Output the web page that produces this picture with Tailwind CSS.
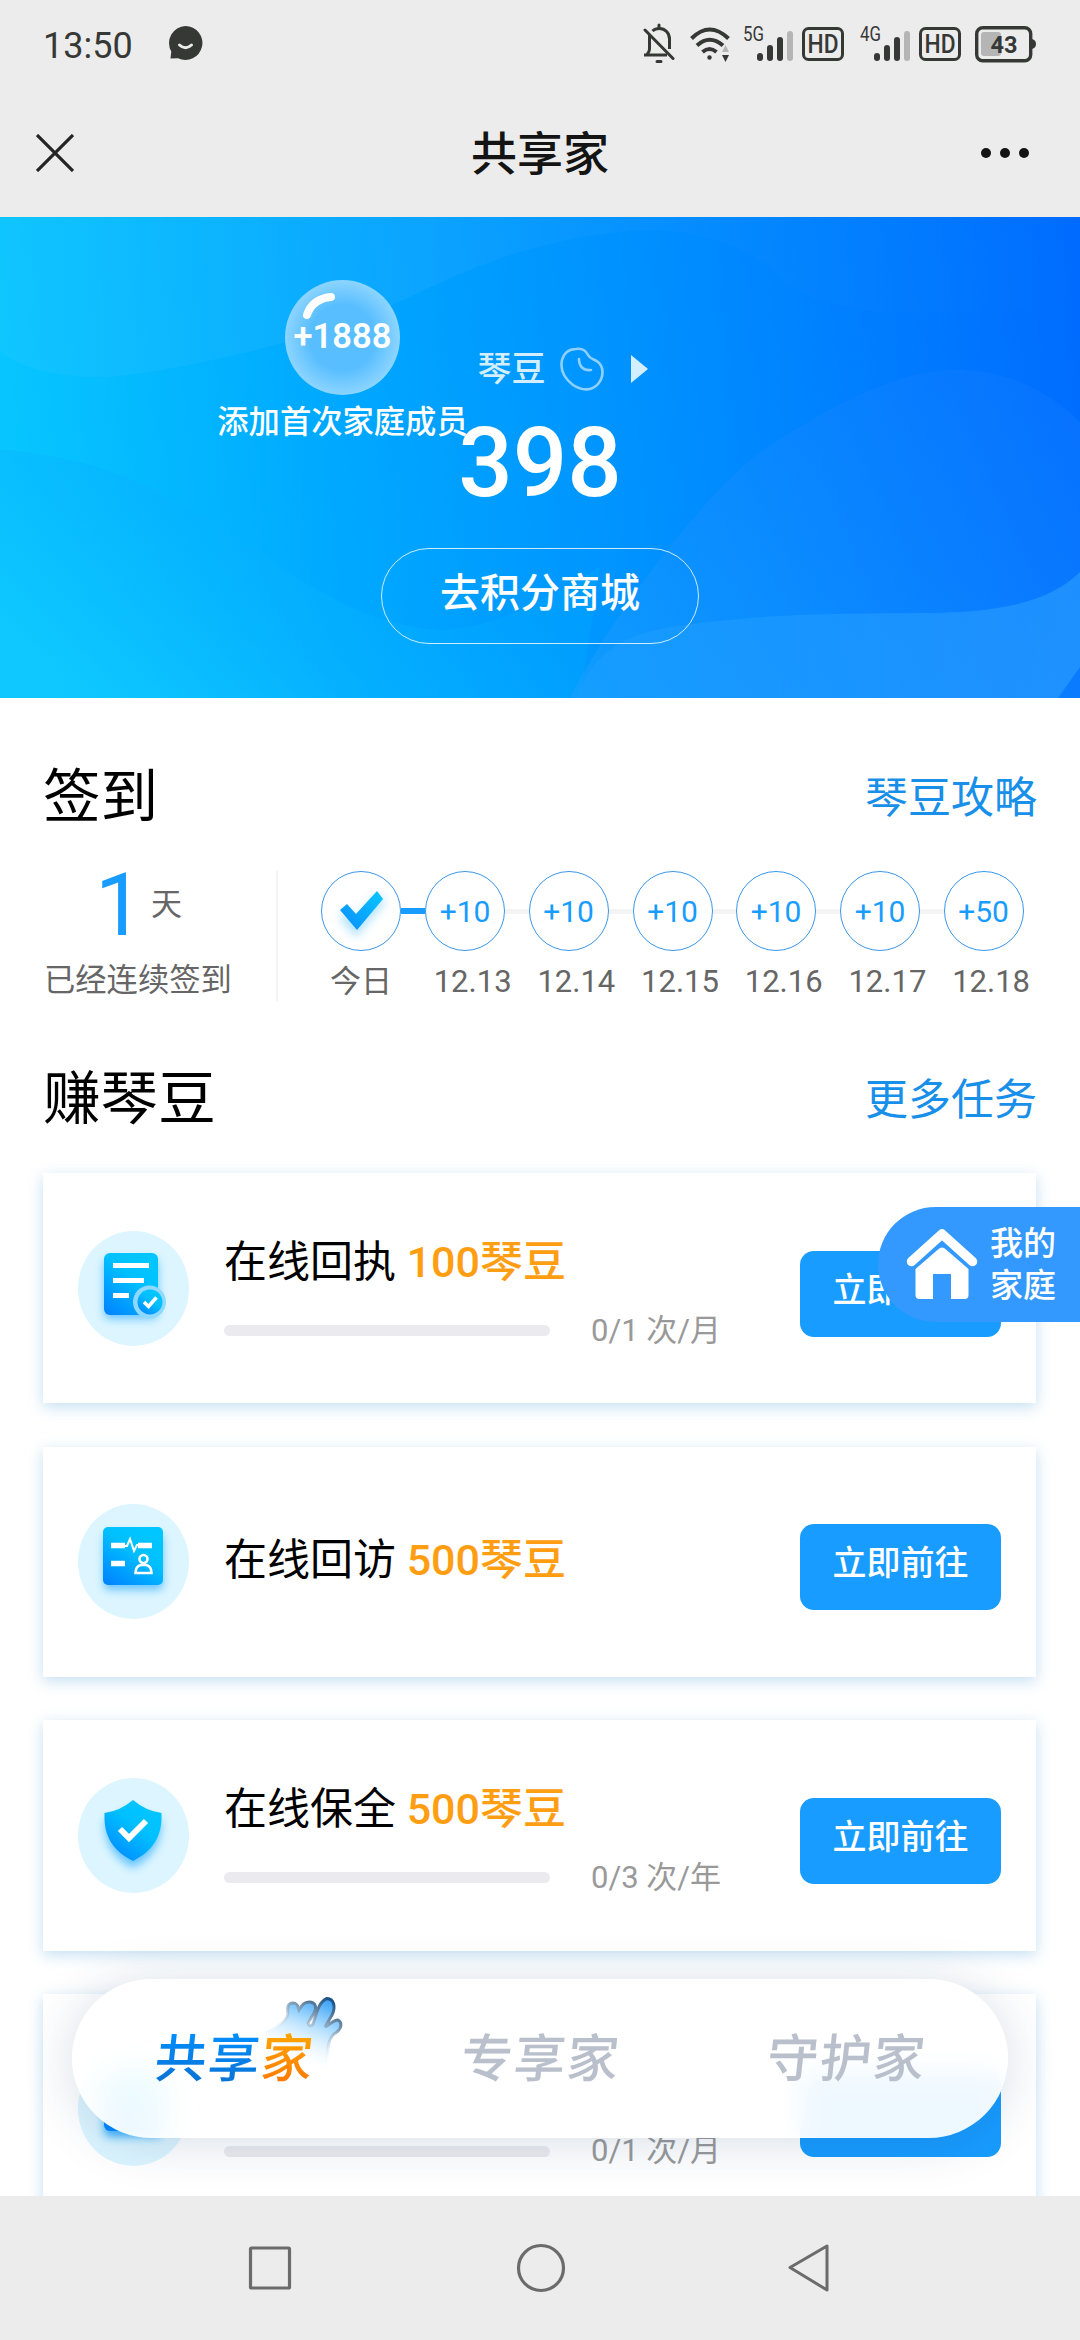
<!DOCTYPE html>
<html lang="zh-CN">
<head>
<meta charset="utf-8">
<title>共享家</title>
<script src="https://cdn.jsdelivr.net/npm/@tailwindcss/browser@4"></script>
</head>
<body class="w-[1080px] h-[2340px] overflow-hidden bg-white flex flex-col relative font-[Roboto,'Noto_Sans_CJK_SC',sans-serif] text-black">

<!-- status bar and title bar -->
<header class="h-[217px] shrink-0 bg-[#ececec] flex flex-col">
  <div class="h-[90px] pl-[43px] pr-[44px] flex items-center justify-between text-[#363836]">
    <div class="flex items-center gap-[34px]">
      <span class="text-[36px] leading-[42px] pt-[1px]">13:50</span>
      <svg class="w-9 h-9 -mt-1" viewBox="0 0 36 36"><path d="M18.500 1a17 17 0 1 1-7.500 32.300L3.500 33.500l.8-7A17 17 0 0 1 18.500 1z" fill="#363836"/><path d="M12.500 20q6 5.500 12 0" fill="none" stroke="#ececec" stroke-width="3" stroke-linecap="round"/></svg>
    </div>
    <div class="flex items-center">
      <svg class="w-[32px] h-[40px] mr-[15px] -mt-1" viewBox="0 0 32 40" fill="none" stroke="#363836" stroke-width="3"><path d="M6.500 12v14q0 3-2.500 5.500M1 32h23M26.500 26V16c0-6-4.500-10.500-10-10.500-3 0-5.500 1-7 2.500"/><path d="M2 7l28 28.500" stroke-linecap="round"/><path d="M16 2v3M14 38.500h4" stroke-linecap="round"/></svg>
      <svg class="w-[40px] h-[38px] mr-[13px]" viewBox="0 0 40 38" fill="none" stroke="#363836" stroke-width="4"><path d="M1.500 12.500q18-18 37 0M7 19.500q12.500-11.500 26 0M12.500 26q7-6 14 0"/><circle cx="19.500" cy="31.500" r="2.200" fill="#363836" stroke="none"/><path d="M32 26l3.500-7 3.500 7z" fill="#b5b5b5" stroke="none"/><path d="M32 29h7l-3.500 7z" fill="#363836" stroke="none"/></svg>
      <svg class="w-[102px] h-[38px] mr-[15px] overflow-visible" viewBox="0 0 102 38"><text x="0" y="15" font-size="20" textLength="21" lengthAdjust="spacingAndGlyphs" fill="#363836">5G</text><rect x="14" y="27" width="6" height="8" rx="3" fill="#363836"/><rect x="24" y="19" width="6" height="16" rx="3" fill="#363836"/><rect x="34" y="11" width="6" height="24" rx="3" fill="#363836"/><rect x="44" y="5" width="6" height="30" rx="3" fill="#b5b5b5"/><rect x="60.500" y="2.500" width="39" height="31" rx="5" fill="none" stroke="#363836" stroke-width="3"/><text x="64.500" y="26.500" font-size="25" font-weight="500" textLength="31" lengthAdjust="spacingAndGlyphs" fill="#363836">HD</text></svg>
      <svg class="w-[102px] h-[38px] mr-[13px] overflow-visible" viewBox="0 0 102 38"><text x="0" y="15" font-size="20" textLength="21" lengthAdjust="spacingAndGlyphs" fill="#363836">4G</text><rect x="14" y="27" width="6" height="8" rx="3" fill="#363836"/><rect x="24" y="19" width="6" height="16" rx="3" fill="#363836"/><rect x="34" y="11" width="6" height="24" rx="3" fill="#363836"/><rect x="44" y="5" width="6" height="30" rx="3" fill="#b5b5b5"/><rect x="60.500" y="2.500" width="39" height="31" rx="5" fill="none" stroke="#363836" stroke-width="3"/><text x="64.500" y="26.500" font-size="25" font-weight="500" textLength="31" lengthAdjust="spacingAndGlyphs" fill="#363836">HD</text></svg>
      <svg class="w-[61px] h-[38px]" viewBox="0 0 61 38"><rect x="1.700" y="1.700" width="54" height="33" rx="6" fill="none" stroke="#363836" stroke-width="3.400"/><rect x="6" y="6" width="20" height="24" rx="3" fill="#b5b5b5"/><path d="M57 13q4 1 4 5t-4 5z" fill="#363836"/><text x="15.500" y="26.500" font-size="24" font-weight="700" textLength="27" lengthAdjust="spacingAndGlyphs" fill="#363836">43</text></svg>
    </div>
  </div>
  <div class="h-[127px] px-9 grid grid-cols-3 items-center pb-[2px]">
    <svg class="w-[38px] h-[38px]" viewBox="0 0 38 38" stroke="#242424" stroke-width="3.200"><path d="M1 1l36 36M37 1L1 37"/></svg>
    <h1 class="text-[46px] leading-[54px] font-medium text-center text-[#141414] pt-[2px]">共享家</h1>
    <div class="flex gap-[9px] justify-end pr-[15px]"><i class="size-[10px] rounded-full bg-[#141414]"></i><i class="size-[10px] rounded-full bg-[#141414]"></i><i class="size-[10px] rounded-full bg-[#141414]"></i></div>
  </div>
</header>

<main class="h-[1979px] shrink-0 overflow-hidden flex flex-col">

  <!-- balance banner -->
  <section class="relative h-[481px] shrink-0 flex flex-col items-center text-white">
    <svg class="absolute inset-0 w-full h-full" viewBox="0 0 1080 481" preserveAspectRatio="none">
      <defs>
        <linearGradient id="sky" gradientUnits="userSpaceOnUse" x1="0" y1="200" x2="1080" y2="100"><stop offset="0" stop-color="#07c6ff"/><stop offset=".3" stop-color="#00a9ff"/><stop offset=".58" stop-color="#0092ff"/><stop offset="1" stop-color="#006cff"/></linearGradient>
        <linearGradient id="w1" x1="0" y1="0" x2="1" y2="0"><stop offset="0" stop-color="#24c8ff" stop-opacity=".3"/><stop offset=".4" stop-color="#20aaff" stop-opacity=".35"/><stop offset=".72" stop-color="#1a8aff" stop-opacity=".12"/><stop offset="1" stop-color="#1a8aff" stop-opacity="0"/></linearGradient>
        <linearGradient id="w2" gradientUnits="userSpaceOnUse" x1="300" y1="220" x2="100" y2="481"><stop offset="0" stop-color="#00a6ff" stop-opacity=".45"/><stop offset=".45" stop-color="#08b4ff" stop-opacity=".5"/><stop offset="1" stop-color="#10c8ff" stop-opacity=".85"/></linearGradient>
        <linearGradient id="w3" x1="0" y1="1" x2="1" y2="0"><stop offset="0" stop-color="#1ea0ff" stop-opacity=".5"/><stop offset="1" stop-color="#1178ff" stop-opacity=".35"/></linearGradient>
        <linearGradient id="w4" x1="0" y1="0" x2="1" y2="0"><stop offset="0" stop-color="#22a2ff" stop-opacity=".35"/><stop offset="1" stop-color="#2a9dff" stop-opacity=".65"/></linearGradient>
      </defs>
      <rect width="1080" height="481" fill="url(#sky)"/>
      <path d="M0 0H1080V90C980 90 830 120 770 50C730 20 680 10 630 14C540 22 470 50 420 75C330 120 200 150 110 160C60 162 20 150 0 135z" fill="url(#w1)"/>
      <path d="M0 232C90 240 150 265 210 305C290 350 340 405 440 413C500 410 540 385 600 350L580 481H0z" fill="url(#w2)"/>
      <path d="M570 481C600 420 690 290 760 235C830 190 900 150 965 153C1010 155 1050 175 1080 205V481z" fill="url(#w3)"/>
      <path d="M578 481C590 440 620 420 660 412C760 395 850 397 920 396C1000 396 1050 385 1080 355V450L1058 481z" fill="url(#w4)"/>
    </svg>
    <div class="relative flex items-center mt-[130px] ml-[45px] h-[44px]">
      <span class="text-[34px] leading-[44px] font-medium text-[#d3efff]">琴豆</span>
      <svg class="w-[44px] h-[44px] ml-[14px]" viewBox="0 0 44 44" fill="none" stroke="#8fd0ff" stroke-width="2.600"><path d="M16 2C22 1 26 4 28 8C30 12 34 12 38 15C44 20 44 30 38 37C32 44 22 44 13 38C4 31 0 22 2 13C4 6 9 2 16 2z"/><path d="M19 12c0 7 4 12 12 11" stroke-linecap="round"/></svg>
      <svg class="w-[17px] h-[28px] ml-[27px]" viewBox="0 0 17 28"><path d="M0 0l17 14L0 28z" fill="#d3efff"/></svg>
    </div>
    <strong class="relative text-[96px] leading-[96px] font-medium mt-[24px]">398</strong>
    <button class="relative mt-[37px] w-[318px] h-[96px] rounded-full border border-white/80 text-[40px] leading-[88px] pb-1 font-medium">去积分商城</button>
    <div class="absolute left-[217px] top-[63px] w-[251px] flex flex-col items-center">
      <div class="relative size-[115px] rounded-full bg-[radial-gradient(circle,#58beff_40%,#8bd4ff_70%)] flex items-center justify-center">
        <svg class="absolute inset-0" viewBox="0 0 115 115"><path d="M22 35Q27 19 46 17" fill="none" stroke="#fff" stroke-width="8" stroke-linecap="round"/></svg>
        <span class="relative text-[34.500px] leading-[40px] font-semibold pb-[3px]">+1888</span>
      </div>
      <span class="text-[31.300px] leading-[40px] font-medium whitespace-nowrap mt-[8px]">添加首次家庭成员</span>
    </div>
  </section>

  <!-- daily sign-in -->
  <section class="px-[43px] pt-[63px] shrink-0">
    <div class="h-[68px] flex items-center justify-between">
      <h2 class="text-[57.600px] leading-[68px] pt-[6px]">签到</h2>
      <a class="text-[43px] leading-[60px] pt-[6px] text-[#188fe9]">琴豆攻略</a>
    </div>
    <div class="mt-[42px] h-[130px] flex">
      <div class="w-[235px] border-r-2 border-[#f3f3f3] flex flex-col text-[#666]">
        <div class="flex items-center h-[72px] pl-[52px]"><span class="text-[87px] leading-[72px] text-[#189cff] -mt-[2px]">1</span><span class="text-[31px] ml-[7px] -mt-[2px]">天</span></div>
        <p class="text-[31.300px] leading-[40px] mt-[20px] pl-[1px] whitespace-nowrap">已经连续签到</p>
      </div>
      <div class="ml-[43px] flex flex-col">
        <div class="flex items-center text-[30px] text-[#189cff]">
          <div class="size-[80px] rounded-full border border-[#3a96ea] flex items-center justify-center">
            <svg class="size-[78px] overflow-visible" viewBox="0 0 78 78"><defs><linearGradient id="tick" x1="0" y1="1" x2="1" y2="0"><stop offset="0" stop-color="#0a8bff"/><stop offset="1" stop-color="#08c8ff"/></linearGradient><filter id="soft" x="-50%" y="-50%" width="200%" height="200%"><feGaussianBlur stdDeviation="5"/></filter></defs><path d="M22 42l12 14 25-30" fill="none" stroke="#7fd0ff" stroke-width="12" opacity=".6" filter="url(#soft)"/><path d="M18 38l7-6 9 10 21-23 6 8-26 31z" fill="url(#tick)"/></svg>
          </div>
          <i class="w-6 h-[6px] bg-[#189cff]"></i>
          <div class="size-[80px] rounded-full border border-[#3a96ea] flex items-center justify-center">+10</div>
          <i class="w-[23.500px] h-[5px] bg-[#f4f4f4]"></i>
          <div class="size-[80px] rounded-full border border-[#3a96ea] flex items-center justify-center">+10</div>
          <i class="w-6 h-[5px] bg-[#f4f4f4]"></i>
          <div class="size-[80px] rounded-full border border-[#3a96ea] flex items-center justify-center">+10</div>
          <i class="w-[23.500px] h-[5px] bg-[#f4f4f4]"></i>
          <div class="size-[80px] rounded-full border border-[#3a96ea] flex items-center justify-center">+10</div>
          <i class="w-6 h-[5px] bg-[#f4f4f4]"></i>
          <div class="size-[80px] rounded-full border border-[#3a96ea] flex items-center justify-center">+10</div>
          <i class="w-[23.500px] h-[5px] bg-[#f4f4f4]"></i>
          <div class="size-[80px] rounded-full border border-[#3a96ea] flex items-center justify-center">+50</div>
        </div>
        <div class="flex text-[31px] leading-[40px] mt-[11px] text-[#666] text-center gap-[23.700px]">
          <span class="w-[80px]">今日</span><span class="w-[80px] pl-[9px]">12.13</span><span class="w-[80px] pl-[9px]">12.14</span><span class="w-[80px] pl-[9px]">12.15</span><span class="w-[80px] pl-[9px]">12.16</span><span class="w-[80px] pl-[9px]">12.17</span><span class="w-[80px] pl-[9px]">12.18</span>
        </div>
      </div>
    </div>
  </section>

  <!-- tasks -->
  <section class="px-[43px] pt-[62px] shrink-0">
    <div class="h-[68px] flex items-center justify-between">
      <h2 class="text-[57.600px] leading-[68px] pt-[6px]">赚琴豆</h2>
      <a class="text-[43px] leading-[60px] pt-[6px] text-[#188fe9]">更多任务</a>
    </div>
    <div class="mt-[42px] w-[993px] flex flex-col gap-[43.200px]">

      <article class="h-[230.400px] bg-white shadow-[0_4px_14px_rgba(60,150,210,.3)] flex items-center px-[35px]">
        <svg class="w-[111px] h-[115px] shrink-0" viewBox="0 0 111 115"><defs><linearGradient id="ic" x1="0" y1="1" x2=".7" y2="0"><stop offset="0" stop-color="#0080ff"/><stop offset=".65" stop-color="#00c0ff"/><stop offset="1" stop-color="#00c6ff"/></linearGradient><filter id="gl" x="-50%" y="-50%" width="200%" height="200%"><feGaussianBlur stdDeviation="4"/></filter></defs><ellipse cx="55.500" cy="57.500" rx="55.500" ry="57.500" fill="#dcf5ff"/><rect x="26" y="28" width="54" height="60" rx="6" fill="#1ea5ff" opacity=".6" filter="url(#gl)"/><rect x="26" y="22" width="54" height="62" rx="6" fill="url(#ic)"/><path d="M35 34.500h36M35 49.500h31M35 64.500h16" stroke="#fff" stroke-width="5"/><circle cx="71.500" cy="71" r="16.500" fill="#8fd9ff"/><circle cx="72" cy="71" r="12.500" fill="url(#ic)"/><path d="M66 71l4.500 4.500 8-9" fill="none" stroke="#fff" stroke-width="3.500"/></svg>
        <div class="ml-[35px] flex-1 h-[117px] mt-1 flex flex-col justify-between">
          <h3 class="text-[43px] leading-[60px] whitespace-nowrap">在线回执 <b class="font-medium text-[#ff9e12]">100琴豆</b></h3>
          <div class="flex items-center text-[31px] leading-[36px] text-[#999]"><i class="w-[326px] h-[11px] rounded-full bg-[#ebebef] mr-[41px]"></i><span>0/1 次/月</span></div>
        </div>
        <button class="w-[201px] h-[86px] mt-[11px] rounded-[14px] bg-[#189cff] text-white text-[34px] leading-[76px] pb-[8px] font-medium">立即前往</button>
      </article>

      <article class="h-[230.400px] bg-white shadow-[0_4px_14px_rgba(60,150,210,.3)] flex items-center px-[35px]">
        <svg class="w-[111px] h-[115px] shrink-0" viewBox="0 0 111 115"><ellipse cx="55.500" cy="57.500" rx="55.500" ry="57.500" fill="#dcf5ff"/><rect x="26" y="30" width="59" height="56" rx="5" fill="#1ea5ff" opacity=".6" filter="url(#gl)"/><rect x="25" y="23" width="60" height="58" rx="5" fill="url(#ic)"/><path d="M33 41.500h14M60 41.500h14M33 59.500h14" stroke="#fff" stroke-width="5.500"/><path d="M46 42h3l3-7 4 12 3-6h4" fill="none" stroke="#fff" stroke-width="2"/><circle cx="65.500" cy="55" r="4" fill="none" stroke="#fff" stroke-width="2.600"/><path d="M57.500 69q0-7 5.500-8h5q5.500 1 5.500 8z" fill="none" stroke="#fff" stroke-width="2.600"/></svg>
        <h3 class="ml-[35px] flex-1 text-[43px] leading-[60px] whitespace-nowrap -mt-[3px]">在线回访 <b class="font-medium text-[#ff9e12]">500琴豆</b></h3>
        <button class="w-[201px] h-[86px] mt-[11px] rounded-[14px] bg-[#189cff] text-white text-[34px] leading-[76px] pb-[8px] font-medium">立即前往</button>
      </article>

      <article class="h-[230.400px] bg-white shadow-[0_4px_14px_rgba(60,150,210,.3)] flex items-center px-[35px]">
        <svg class="w-[111px] h-[115px] shrink-0" viewBox="0 0 111 115"><ellipse cx="55.500" cy="57.500" rx="55.500" ry="57.500" fill="#dcf5ff"/><path d="M55 30q13 10 28 12c1 24-9 38-28 48-19-10-29-24-28-48q15-2 28-12z" fill="#1ea5ff" opacity=".6" filter="url(#gl)"/><path d="M55 22q13 11 28.500 13c1 24-9 38-28.500 48-19.500-10-29.500-24-28.500-48q15.500-2 28.500-13z" fill="url(#ic)"/><path d="M42 51l9 9 17-17" fill="none" stroke="#fff" stroke-width="6"/></svg>
        <div class="ml-[35px] flex-1 h-[117px] mt-1 flex flex-col justify-between">
          <h3 class="text-[43px] leading-[60px] whitespace-nowrap">在线保全 <b class="font-medium text-[#ff9e12]">500琴豆</b></h3>
          <div class="flex items-center text-[31px] leading-[36px] text-[#999]"><i class="w-[326px] h-[11px] rounded-full bg-[#ebebef] mr-[41px]"></i><span>0/3 次/年</span></div>
        </div>
        <button class="w-[201px] h-[86px] mt-[11px] rounded-[14px] bg-[#189cff] text-white text-[34px] leading-[76px] pb-[8px] font-medium">立即前往</button>
      </article>

      <article class="h-[230.400px] bg-white shadow-[0_4px_14px_rgba(60,150,210,.3)] flex items-center px-[35px]">
        <svg class="w-[111px] h-[115px] shrink-0" viewBox="0 0 111 115"><ellipse cx="55.500" cy="57.500" rx="55.500" ry="57.500" fill="#dcf5ff"/><rect x="26" y="28" width="58" height="58" rx="6" fill="#1ea5ff" opacity=".8" filter="url(#gl)"/><rect x="26" y="22" width="58" height="58" rx="6" fill="url(#ic)"/></svg>
        <div class="ml-[35px] flex-1 h-[117px] mt-1 flex flex-col justify-between">
          <h3 class="text-[43px] leading-[60px] whitespace-nowrap">&nbsp;</h3>
          <div class="flex items-center text-[31px] leading-[36px] text-[#999]"><i class="w-[326px] h-[11px] rounded-full bg-[#ebebef] mr-[41px]"></i><span>0/1 次/月</span></div>
        </div>
        <button class="w-[201px] h-[86px] mt-[11px] rounded-[14px] bg-[#189cff]"></button>
      </article>
    </div>
  </section>
</main>

<!-- floating family entry -->
<a class="absolute right-0 top-[1207px] w-[202px] h-[115px] rounded-l-full bg-[#3399ff] flex items-center pl-[28px] text-white">
  <svg class="w-[72px] h-[72px] shrink-0 -mt-[1px]" viewBox="0 0 72 72"><path d="M5.500 33.500L36 6l30.500 27.500" fill="none" stroke="#fff" stroke-width="9.500" stroke-linecap="round" stroke-linejoin="round"/><path d="M36 19.500q2 0 4 2L62.500 41v26q0 4-4 4H45V46H27v25H13.500q-4 0-4-4V41L32 21.500q2-2 4-2z" fill="#fff"/></svg>
  <span class="text-[33px] leading-[42px] font-medium ml-[12px]">我的<br>家庭</span>
</a>

<!-- floating tabs -->
<nav class="absolute left-[72px] top-[1979px] w-[936px] h-[159px] rounded-full bg-white/93 backdrop-blur-[14px] shadow-[0_4px_50px_rgba(20,60,110,.17)] flex items-center justify-between pl-[83px] pr-[82px] pt-[3px] font-medium text-[51.500px] leading-[60px] tracking-[1.500px]">
  <div class="relative">
    <svg class="absolute left-[105px] -top-[40px] w-[96px] h-[90px]" viewBox="0 0 96 90"><defs><linearGradient id="hand" gradientUnits="userSpaceOnUse" x1="70" y1="8" x2="44" y2="76"><stop offset="0" stop-color="#2f9cf5"/><stop offset=".4" stop-color="#a9dbff"/><stop offset="1" stop-color="#fff" stop-opacity="0"/></linearGradient><linearGradient id="edge" gradientUnits="userSpaceOnUse" x1="74" y1="8" x2="44" y2="60"><stop offset="0" stop-color="#0d4680"/><stop offset=".35" stop-color="#6d8ba6"/><stop offset="1" stop-color="#dfeefa" stop-opacity="0"/></linearGradient></defs><path d="M6 41C18 37 26 32 28 24C27 17 28 13 33 13C38 13 38 17 39 20C42 15 44 12 49 12C56 12 57 18 54 23L48 33C49 37 52 36 53 34C56 26 58 12 67 8.500C74 9 76 17 72 25L65 37C70 34 74 30 78 30C82 32 82 38 77 42C69 46 67 54 67 80L6 76z" fill="url(#hand)"/><path d="M6 41C18 37 26 32 28 24C27 17 28 13 33 13C38 13 38 17 39 20C42 15 44 12 49 12C56 12 57 18 54 23L48 33C49 37 52 36 53 34C56 26 58 12 67 8.500C74 9 76 17 72 25L65 37C70 34 74 30 78 30C82 32 82 38 77 42C69 46 67 54 67 80" fill="none" stroke="url(#edge)" stroke-width="3"/></svg>
    <span class="relative inline-block -skew-x-6 bg-gradient-to-b from-[#0090ff] to-[#0a6fd0] bg-clip-text text-transparent">共享</span><span class="relative inline-block -skew-x-6 bg-gradient-to-b from-[#ffa800] to-[#ff7200] bg-clip-text text-transparent">家</span>
  </div>
  <span class="inline-block -skew-x-6 text-[#b9c0cc]">专享家</span>
  <span class="inline-block -skew-x-6 text-[#b9c0cc]">守护家</span>
</nav>

<!-- system navigation -->
<footer class="h-[144px] shrink-0 bg-[#ececec] relative flex items-center justify-between pl-[247px] pr-[250px]">
  <svg class="size-[46px]" viewBox="0 0 46 46" fill="none" stroke="#6b6b6b" stroke-width="3.200"><rect x="3.500" y="3" width="39" height="40" rx="1"/></svg>
  <svg class="size-[50px]" viewBox="0 0 50 50" fill="none" stroke="#6b6b6b" stroke-width="3.200"><circle cx="25" cy="25" r="22.500"/></svg>
  <svg class="w-[42px] h-[50px]" viewBox="0 0 42 50" fill="none" stroke="#6b6b6b" stroke-width="3" stroke-linejoin="round"><path d="M2 24.500L39 3v44z"/></svg>
</footer>
</body>
</html>
